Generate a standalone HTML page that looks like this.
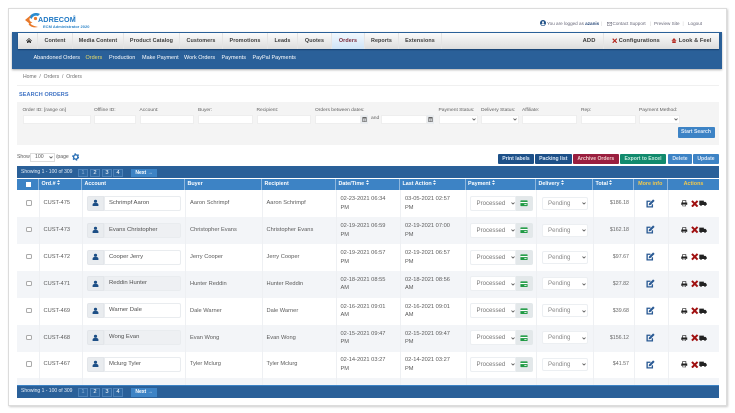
<!DOCTYPE html>
<html><head><meta charset="utf-8"><title>Orders</title>
<style>
*{box-sizing:border-box}
html,body{margin:0;padding:0;background:#fff}
body{width:735px;height:413px;overflow:hidden;position:relative;font-family:"Liberation Sans",sans-serif;font-size:5.7px;color:#5a5a5a}
#w{position:absolute;left:0;top:0;width:735px;height:413px;filter:blur(.28px)}
#w div,#w span.a,#w svg.a{position:absolute;white-space:nowrap}
.card{left:7.5px;top:7.5px;width:719px;height:398px;background:#fff;border:1px solid #dcdcdc;box-shadow:1px 1px 2px #ccc}
.tab{top:32.5px;height:16px;line-height:16px;text-align:center;font-weight:bold;font-size:5.4px;color:#3a3a3a;letter-spacing:.1px;border-right:1px solid #e4e4e4;background:linear-gradient(#fbfbfb,#dcdcdc)}
.sub{top:53.5px;color:#fff;font-size:5.5px;line-height:8px}
.top{top:20px;font-size:4.6px;line-height:7px;color:#667}
.lb{top:107.7px;font-size:4.9px;line-height:6px;color:#5f5f5f}
.in{top:114.5px;height:9px;background:#fff;border:1px solid #eee}
.cal{top:114.5px;width:7px;height:9px;background:#e9ecef}
.btn{top:153.5px;height:10px;line-height:10px;text-align:center;color:#dbe8f7;font-weight:bold;font-size:5.1px;border-radius:1px}
.ph{background:#2a6099;height:12.5px;left:17px;width:702px;line-height:12px;color:#e6eef7}
.pg{height:8.5px;width:10px;border:1px solid #4e82b8;color:#fff;text-align:center;line-height:7px;font-size:5.8px;background:#2f68a2}
.hd{top:178.5px;height:11.5px;line-height:11.5px;background:#3d83c5;color:#fff;font-weight:bold;font-size:5.4px;padding-left:2.5px;border-right:1px solid #8fb7dd}
.y{color:#f2c94c;text-align:center;padding:0}
svg.s{display:inline-block;width:3px;height:5px;margin-left:1.5px;vertical-align:-.6px}
.rw{left:17px;width:702px;height:27px}
.alt{background:#f3f5f8}
.vl{top:190px;height:195px;width:1px;background:#eef0f3}
.ck{left:9px;top:10px;width:5.5px;height:5.5px;border:.7px solid #aaa;border-radius:1.6px;background:#fff}
.t{line-height:8.7px;font-size:5.7px;color:#5a5a5a}
.o{left:26.5px;top:9px}
.ig{left:70px;top:5.8px;width:17px;height:15px;background:#e9ecef;border:1px solid #e3e6ea;border-radius:2px 0 0 2px}
.nm{left:87px;top:5.8px;width:77px;height:15px;line-height:13px;padding-left:4px;background:#fff;border:1px solid #e9ecef;color:#4f4f4f;font-size:5.9px;border-radius:0 2px 2px 0}
.alt .nm{background:#eef0f3}
.b{left:173px;top:9px}.c{left:249.5px;top:9px}
.d{left:323.5px;top:5px}.e{left:388px;top:5px}
.sl{left:453px;top:5.8px;width:46px;height:15px;line-height:13px;background:#fff;border:1px solid #eceff2;padding-left:5.5px;color:#777;font-size:6.1px;border-radius:2px 0 0 2px}
.gb{left:498.5px;top:5.8px;width:17px;height:15px;background:#e3e8ea;border-radius:0 2px 2px 0}
.dl{left:524.5px;top:6.8px;width:46.5px;height:13px;line-height:11px;background:#fff;border:1px solid #eceff2;padding-left:5.5px;color:#888;font-size:6.1px;border-radius:2px}
.tt{right:90px;top:9px;text-align:right;font-size:5.3px;color:#666}
.ch{width:4px;height:3px}
.cs{left:493.5px;top:12px}.cd{left:565px;top:12px}
.u{left:75px;top:9px}.gi{left:503px;top:10px}.ei{left:629px;top:8.5px}.pi{left:664px;top:10px}.xi{left:674px;top:9.5px}.ti{left:682px;top:10px}
</style></head><body>
<svg width="0" height="0" style="position:absolute">
<symbol id="u" viewBox="0 0 24 24"><circle cx="12" cy="7" r="5.5" fill="#1d4f86"/><path d="M2 23v-4c0-4 3-6 6-6h8c3 0 6 2 6 6v4z" fill="#1d4f86"/></symbol>
<symbol id="cv" viewBox="0 0 10 8"><path d="M1 1.5l4 4 4-4" fill="none" stroke="#555" stroke-width="2.2"/></symbol>
<symbol id="srt" viewBox="0 0 6 10"><path d="M3 0l3 4H0zM3 10L0 6h6z" fill="#f0f5fb"/></symbol>
<symbol id="cd" viewBox="0 0 24 20"><rect x="1" y="1" width="22" height="18" rx="2" fill="#1f9a43"/><rect x="1" y="6" width="22" height="3.5" fill="#fff"/><rect x="13" y="13" width="7" height="2.5" fill="#fff"/></symbol>
<symbol id="ed" viewBox="0 0 24 24"><path d="M17 14v7H3V6h9" fill="none" stroke="#2a5a94" stroke-width="3.6"/><path d="M8 12L19 1l4 4-11 11-5 1z" fill="#2a5a94"/></symbol>
<symbol id="pr" viewBox="0 0 24 24"><path d="M6 9V2h12v7" fill="none" stroke="#222" stroke-width="2.5"/><path d="M1 9h22v9h-4v-3H5v3H1z" fill="#222"/><path d="M6.5 16h11v6h-11z" fill="none" stroke="#222" stroke-width="2"/></symbol>
<symbol id="x" viewBox="0 0 24 24"><path d="M3 3l18 18M21 3L3 21" stroke="#a01010" stroke-width="6.5"/></symbol>
<symbol id="tr" viewBox="0 0 28 22"><path d="M1 2h16v15H1zM17 6h6l4 5v6H17z" fill="#222"/><circle cx="7" cy="18" r="2.6" fill="#222"/><circle cx="21" cy="18" r="2.6" fill="#222"/></symbol>
<symbol id="cl" viewBox="0 0 14 16"><path d="M2 3h10v12H2z" fill="none" stroke="#555" stroke-width="1.6"/><path d="M2 3h10v3H2z" fill="#555"/><path d="M4 8h6M4 10.5h6M4 13h6" stroke="#777" stroke-width="1.2"/></symbol>
</svg>
<div id="w">
<div class="card"></div>

<!-- logo -->
<svg class="a" style="left:24px;top:12px" width="18" height="17" viewBox="0 0 18 17"><path d="M5 5C8 1 12 0 16 2l-2 2C11 3 9 4 7.5 7z" fill="#2c8ccf"/><path d="M1 8l6-5-1.5 4c0 2 1 3 3 3L6 12z" fill="#e8792b"/><path d="M6 11c1 2 4 3 8 4-4 1-8 0-9.500-3z" fill="#e8792b"/><circle cx="11.500" cy="6.500" r="1.600" fill="#e8792b"/></svg>
<div style="left:38px;top:15px;font-size:7.2px;line-height:10px;font-weight:bold;color:#1f78c4;letter-spacing:.1px">ADRECOM</div>
<div style="left:73px;top:15px;font-size:3.5px;line-height:4px;color:#1f78c4">®</div>
<div style="left:43px;top:24px;font-size:3.95px;line-height:5px;font-weight:bold;color:#2c84c8;letter-spacing:.05px">ECM Administrator 2020</div>

<!-- top links -->
<svg class="a" style="left:540px;top:20px" width="6" height="6" viewBox="0 0 24 24"><circle cx="12" cy="12" r="12" fill="#1d4f86"/><circle cx="12" cy="9" r="4" fill="#fff"/><path d="M5 19c1-4 4-5 7-5s6 1 7 5c-4 3-10 3-14 0z" fill="#fff"/></svg>
<div class="top" style="left:547px">You are logged as <b style="color:#2a4a7a">azanis</b></div>
<div class="top" style="left:601px;color:#ccc">|</div>
<svg class="a" style="left:606.5px;top:21.5px" width="5" height="4" viewBox="0 0 12 9"><path d="M.5.5h11v8H.5zM.5 1l5.5 4 5.5-4" fill="none" stroke="#556" stroke-width="1"/></svg>
<div class="top" style="left:612.5px">Contact Support</div>
<div class="top" style="left:650px;color:#ccc">|</div>
<div class="top" style="left:654px">Preview Site</div>
<div class="top" style="left:682.5px;color:#ccc">|</div>
<div class="top" style="left:688px">Logout</div>

<!-- nav -->
<div style="left:11.5px;top:32px;width:710.5px;height:36.5px;background:#2a6099;box-shadow:0 1px 2px #aaa"></div>
<div style="left:18px;top:32.5px;width:701px;height:16px;background:linear-gradient(#fbfbfb,#dcdcdc);box-shadow:0 1px 1px #16406e"></div>
<div class="tab" style="left:18px;width:20px"></div>
<svg class="a" style="left:26px;top:37.5px" width="6" height="5.5" viewBox="0 0 12 11"><path d="M6 0l6 5.5-1 1L6 2 1 6.5l-1-1zM2 7l4-3.5L10 7v4H7V8H5v3H2z" fill="#333"/></svg>
<div class="tab" style="left:38px;width:35px">Content</div>
<div class="tab" style="left:73px;width:51px">Media Content</div>
<div class="tab" style="left:124px;width:56px">Product Catalog</div>
<div class="tab" style="left:180px;width:43px">Customers</div>
<div class="tab" style="left:223px;width:45px">Promotions</div>
<div class="tab" style="left:268px;width:30px">Leads</div>
<div class="tab" style="left:298px;width:34px">Quotes</div>
<div class="tab" style="left:332px;width:33px;background:linear-gradient(#f2f8fe,#cfe3f6);color:#7a2a3a">Orders</div>
<div class="tab" style="left:365px;width:34px">Reports</div>
<div class="tab" style="left:399px;width:43px">Extensions</div>
<div class="tab" style="left:442px;width:162px;text-align:right;padding-right:7.5px;font-size:5.8px">ADD</div>
<div class="tab" style="left:604px;width:59px;border-right:0;padding-left:14.7px;text-align:left;font-size:5.6px">Configurations</div>
<svg class="a" style="left:611.5px;top:37.5px" width="5.5" height="5.5" viewBox="0 0 24 24"><path d="M3 3l18 18M21 3L3 21" stroke="#b3261e" stroke-width="5"/></svg>
<div class="tab" style="left:663px;width:56px;border-right:0;padding-left:15.700px;text-align:left;font-size:5.6px">Look &amp; Feel</div>
<svg class="a" style="left:670.5px;top:37.5px" width="6" height="5.5" viewBox="0 0 24 22"><path d="M12 0l7 8H5zM3 9h18v3H3zM5 13h14v9H5z" fill="#b3261e"/></svg>
<div class="sub" style="left:33.5px">Abandoned Orders</div>
<div class="sub" style="left:85.5px;color:#e8dc6a">Orders</div>
<div class="sub" style="left:109px">Production</div>
<div class="sub" style="left:142px">Make Payment</div>
<div class="sub" style="left:184px">Work Orders</div>
<div class="sub" style="left:221.5px">Payments</div>
<div class="sub" style="left:252.5px">PayPal Payments</div>

<!-- breadcrumb -->
<div style="left:23px;top:74px;font-size:5.1px;line-height:6px;color:#6f6f6f">Home &nbsp;/&nbsp; Orders &nbsp;/&nbsp; Orders</div>
<div style="left:17px;top:85px;width:702px;height:1px;background:#f0f0f0"></div>
<div style="left:19px;top:91.5px;font-size:5.5px;line-height:7px;font-weight:bold;color:#3f73c4;letter-spacing:.1px">SEARCH ORDERS</div>

<!-- search -->
<div style="left:17px;top:102px;width:702px;height:43px;background:#f4f4f4"></div>
<div class="lb" style="left:22.5px">Order ID: [range on]</div><div class="in" style="left:22.5px;width:68px"></div>
<div class="lb" style="left:94px">Offline ID:</div><div class="in" style="left:94px;width:41.5px"></div>
<div class="lb" style="left:139.5px">Account:</div><div class="in" style="left:139.5px;width:54.5px"></div>
<div class="lb" style="left:198px">Buyer:</div><div class="in" style="left:198px;width:54.5px"></div>
<div class="lb" style="left:256.5px">Recipient:</div><div class="in" style="left:256.5px;width:54.5px"></div>
<div class="lb" style="left:315px">Orders between dates:</div><div class="in" style="left:315px;width:46px"></div>
<div class="cal" style="left:361px"></div><svg class="a" style="left:362px;top:115.5px" width="5" height="6.5"><use href="#cl"/></svg>
<div class="lb" style="left:371px;top:116px">and</div>
<div class="in" style="left:380.5px;width:46px"></div>
<div class="cal" style="left:427px"></div><svg class="a" style="left:428px;top:115.5px" width="5" height="6.5"><use href="#cl"/></svg>
<div class="lb" style="left:438.5px">Payment Status:</div><div class="in" style="left:438.5px;width:39px"></div><svg class="a ch" style="left:472px;top:118px"><use href="#cv"/></svg>
<div class="lb" style="left:481px">Delivery Status:</div><div class="in" style="left:481px;width:37.5px"></div><svg class="a ch" style="left:513px;top:118px"><use href="#cv"/></svg>
<div class="lb" style="left:522px">Affiliate:</div><div class="in" style="left:522px;width:55px"></div>
<div class="lb" style="left:581px">Rep:</div><div class="in" style="left:581px;width:55px"></div>
<div class="lb" style="left:639px">Payment Method:</div><div class="in" style="left:639px;width:40.5px"></div><svg class="a ch" style="left:674px;top:118px"><use href="#cv"/></svg>
<div class="btn" style="left:677.5px;top:127px;width:37px;height:11px;line-height:11px;background:#3d83c5">Start Search</div>

<!-- toolbar -->
<div style="left:17px;top:154px;font-size:5.1px;line-height:6px">Show:</div>
<div style="left:30px;top:153px;width:25px;height:8.5px;line-height:7px;background:#fff;border:1px solid #ddd;padding-left:4px;font-size:5.2px">100</div><svg class="a ch" style="left:49px;top:156px"><use href="#cv"/></svg>
<div style="left:56px;top:154px;font-size:5.1px;line-height:6px">/page</div>
<svg class="a" style="left:71.500px;top:153px" width="7.500" height="8" viewBox="0 0 16 16"><circle cx="8" cy="8" r="4.600" fill="none" stroke="#2a6fb5" stroke-width="3"/><circle cx="8" cy="8" r="6.600" fill="none" stroke="#2a6fb5" stroke-width="2.600" stroke-dasharray="3 3.900"/></svg>
<div class="btn" style="left:498px;width:36px;background:#1d5088">Print labels</div>
<div class="btn" style="left:535px;width:36.5px;background:#1d5088">Packing list</div>
<div class="btn" style="left:573px;width:45.5px;background:#9a1f3f;color:#ecc">Archive Orders</div>
<div class="btn" style="left:620px;width:46px;background:#118a6d;color:#c6ebdf">Export to Excel</div>
<div class="btn" style="left:668px;width:24px;background:#3d83c5">Delete</div>
<div class="btn" style="left:693px;width:26px;background:#3d83c5">Update</div>

<!-- pager top -->
<div class="ph" style="top:165.5px"></div>
<div style="left:21px;top:168.5px;line-height:7px;font-size:5px;color:#e6eef7">Showing 1 - 100 of 309</div>
<div class="pg" style="left:78px;top:168.5px;color:#8fb4dc">1</div><div class="pg" style="left:90px;top:168.5px">2</div><div class="pg" style="left:102px;top:168.5px">3</div><div class="pg" style="left:113px;top:168.5px">4</div>
<div class="pg" style="left:131px;top:168.5px;width:26px;background:#3d83c5;border-color:#3d83c5;font-weight:bold;font-size:5px">Next →</div>

<!-- head -->
<div class="hd" style="left:17px;width:22px"></div><div style="left:25.5px;top:181.500px;width:5px;height:5px;background:#fff"></div>
<div class="hd" style="left:39px;width:43px">Ord.#<svg class="s"><use href="#srt"/></svg></div>
<div class="hd" style="left:82px;width:103px">Account</div>
<div class="hd" style="left:185px;width:77px">Buyer</div>
<div class="hd" style="left:262px;width:74px">Recipient</div>
<div class="hd" style="left:336px;width:64px">Date/Time<svg class="s"><use href="#srt"/></svg></div>
<div class="hd" style="left:400px;width:65.5px">Last Action<svg class="s"><use href="#srt"/></svg></div>
<div class="hd" style="left:465.5px;width:70.5px">Payment<svg class="s"><use href="#srt"/></svg></div>
<div class="hd" style="left:536px;width:57px">Delivery<svg class="s"><use href="#srt"/></svg></div>
<div class="hd" style="left:593px;width:40.5px">Total<svg class="s"><use href="#srt"/></svg></div>
<div class="hd y" style="left:633.5px;width:34.5px">More info</div>
<div class="hd y" style="left:668px;width:51px;border-right:0">Actions</div>

<!-- rows -->
<div class="rw" style="top:190px"><div class="ck"></div><div class="t o">CUST-475</div><div class="ig"></div><svg class="a u" width="7" height="7.5"><use href="#u"/></svg><div class="nm">Schrimpf Aaron</div><div class="t b">Aaron Schrimpf</div><div class="t c">Aaron Schrimpf</div><div class="t d">02-23-2021 06:34<br>PM</div><div class="t e">03-05-2021 02:57<br>PM</div><div class="sl">Processed</div><svg class="a ch cs"><use href="#cv"/></svg><div class="gb"></div><svg class="a gi" width="8" height="6.5"><use href="#cd"/></svg><div class="dl">Pending</div><svg class="a ch cd"><use href="#cv"/></svg><div class="t tt">$186.18</div><svg class="a ei" width="9" height="9"><use href="#ed"/></svg><svg class="a pi" width="6.5" height="6.5"><use href="#pr"/></svg><svg class="a xi" width="7.5" height="7.5"><use href="#x"/></svg><svg class="a ti" width="8" height="6.5"><use href="#tr"/></svg></div>

<div class="rw alt" style="top:216.9px"><div class="ck"></div><div class="t o">CUST-473</div><div class="ig"></div><svg class="a u" width="7" height="7.5"><use href="#u"/></svg><div class="nm">Evans Christopher</div><div class="t b">Christopher Evans</div><div class="t c">Christopher Evans</div><div class="t d">02-19-2021 06:59<br>PM</div><div class="t e">02-19-2021 07:00<br>PM</div><div class="sl">Processed</div><svg class="a ch cs"><use href="#cv"/></svg><div class="gb"></div><svg class="a gi" width="8" height="6.5"><use href="#cd"/></svg><div class="dl">Pending</div><svg class="a ch cd"><use href="#cv"/></svg><div class="t tt">$162.18</div><svg class="a ei" width="9" height="9"><use href="#ed"/></svg><svg class="a pi" width="6.5" height="6.5"><use href="#pr"/></svg><svg class="a xi" width="7.5" height="7.5"><use href="#x"/></svg><svg class="a ti" width="8" height="6.5"><use href="#tr"/></svg></div>

<div class="rw" style="top:243.8px"><div class="ck"></div><div class="t o">CUST-472</div><div class="ig"></div><svg class="a u" width="7" height="7.5"><use href="#u"/></svg><div class="nm">Cooper Jerry</div><div class="t b">Jerry Cooper</div><div class="t c">Jerry Cooper</div><div class="t d">02-19-2021 06:57<br>PM</div><div class="t e">02-19-2021 06:57<br>PM</div><div class="sl">Processed</div><svg class="a ch cs"><use href="#cv"/></svg><div class="gb"></div><svg class="a gi" width="8" height="6.5"><use href="#cd"/></svg><div class="dl">Pending</div><svg class="a ch cd"><use href="#cv"/></svg><div class="t tt">$97.67</div><svg class="a ei" width="9" height="9"><use href="#ed"/></svg><svg class="a pi" width="6.5" height="6.5"><use href="#pr"/></svg><svg class="a xi" width="7.5" height="7.5"><use href="#x"/></svg><svg class="a ti" width="8" height="6.5"><use href="#tr"/></svg></div>

<div class="rw alt" style="top:270.7px"><div class="ck"></div><div class="t o">CUST-471</div><div class="ig"></div><svg class="a u" width="7" height="7.5"><use href="#u"/></svg><div class="nm">Reddin Hunter</div><div class="t b">Hunter Reddin</div><div class="t c">Hunter Reddin</div><div class="t d">02-18-2021 08:55<br>AM</div><div class="t e">02-18-2021 08:56<br>AM</div><div class="sl">Processed</div><svg class="a ch cs"><use href="#cv"/></svg><div class="gb"></div><svg class="a gi" width="8" height="6.5"><use href="#cd"/></svg><div class="dl">Pending</div><svg class="a ch cd"><use href="#cv"/></svg><div class="t tt">$27.82</div><svg class="a ei" width="9" height="9"><use href="#ed"/></svg><svg class="a pi" width="6.5" height="6.5"><use href="#pr"/></svg><svg class="a xi" width="7.5" height="7.5"><use href="#x"/></svg><svg class="a ti" width="8" height="6.5"><use href="#tr"/></svg></div>

<div class="rw" style="top:297.6px"><div class="ck"></div><div class="t o">CUST-469</div><div class="ig"></div><svg class="a u" width="7" height="7.5"><use href="#u"/></svg><div class="nm">Warner Dale</div><div class="t b">Dale Warner</div><div class="t c">Dale Warner</div><div class="t d">02-16-2021 09:01<br>AM</div><div class="t e">02-16-2021 09:01<br>AM</div><div class="sl">Processed</div><svg class="a ch cs"><use href="#cv"/></svg><div class="gb"></div><svg class="a gi" width="8" height="6.5"><use href="#cd"/></svg><div class="dl">Pending</div><svg class="a ch cd"><use href="#cv"/></svg><div class="t tt">$39.68</div><svg class="a ei" width="9" height="9"><use href="#ed"/></svg><svg class="a pi" width="6.5" height="6.5"><use href="#pr"/></svg><svg class="a xi" width="7.5" height="7.5"><use href="#x"/></svg><svg class="a ti" width="8" height="6.5"><use href="#tr"/></svg></div>

<div class="rw alt" style="top:324.5px"><div class="ck"></div><div class="t o">CUST-468</div><div class="ig"></div><svg class="a u" width="7" height="7.5"><use href="#u"/></svg><div class="nm">Wong Evan</div><div class="t b">Evan Wong</div><div class="t c">Evan Wong</div><div class="t d">02-15-2021 09:47<br>PM</div><div class="t e">02-15-2021 09:47<br>PM</div><div class="sl">Processed</div><svg class="a ch cs"><use href="#cv"/></svg><div class="gb"></div><svg class="a gi" width="8" height="6.5"><use href="#cd"/></svg><div class="dl">Pending</div><svg class="a ch cd"><use href="#cv"/></svg><div class="t tt">$156.12</div><svg class="a ei" width="9" height="9"><use href="#ed"/></svg><svg class="a pi" width="6.5" height="6.5"><use href="#pr"/></svg><svg class="a xi" width="7.5" height="7.5"><use href="#x"/></svg><svg class="a ti" width="8" height="6.5"><use href="#tr"/></svg></div>

<div class="rw" style="top:351.4px"><div class="ck"></div><div class="t o">CUST-467</div><div class="ig"></div><svg class="a u" width="7" height="7.5"><use href="#u"/></svg><div class="nm">Mclurg Tyler</div><div class="t b">Tyler Mclurg</div><div class="t c">Tyler Mclurg</div><div class="t d">02-14-2021 03:27<br>PM</div><div class="t e">02-14-2021 03:27<br>PM</div><div class="sl">Processed</div><svg class="a ch cs"><use href="#cv"/></svg><div class="gb"></div><svg class="a gi" width="8" height="6.5"><use href="#cd"/></svg><div class="dl">Pending</div><svg class="a ch cd"><use href="#cv"/></svg><div class="t tt">$41.57</div><svg class="a ei" width="9" height="9"><use href="#ed"/></svg><svg class="a pi" width="6.5" height="6.5"><use href="#pr"/></svg><svg class="a xi" width="7.5" height="7.5"><use href="#x"/></svg><svg class="a ti" width="8" height="6.5"><use href="#tr"/></svg></div>

<div class="rw alt" style="top:378.3px;height:6.7px"></div>

<!-- column lines -->
<div class="vl" style="left:39px"></div><div class="vl" style="left:82px"></div><div class="vl" style="left:185px"></div><div class="vl" style="left:262px"></div><div class="vl" style="left:336px"></div><div class="vl" style="left:400px"></div><div class="vl" style="left:465.5px"></div><div class="vl" style="left:536px"></div><div class="vl" style="left:593px"></div><div class="vl" style="left:633.5px"></div><div class="vl" style="left:668px"></div>

<!-- pager bottom -->
<div class="ph" style="top:385px;height:13px;border-top:1px solid #3d83c5"></div>
<div style="left:21px;top:388px;line-height:7px;font-size:5px;color:#e6eef7">Showing 1 - 100 of 309</div>
<div class="pg" style="left:78px;top:388px;color:#8fb4dc">1</div><div class="pg" style="left:90px;top:388px">2</div><div class="pg" style="left:102px;top:388px">3</div><div class="pg" style="left:113px;top:388px">4</div>
<div class="pg" style="left:131px;top:388px;width:26px;background:#3d83c5;border-color:#3d83c5;font-weight:bold;font-size:5px">Next →</div>
</div>
</body></html>
